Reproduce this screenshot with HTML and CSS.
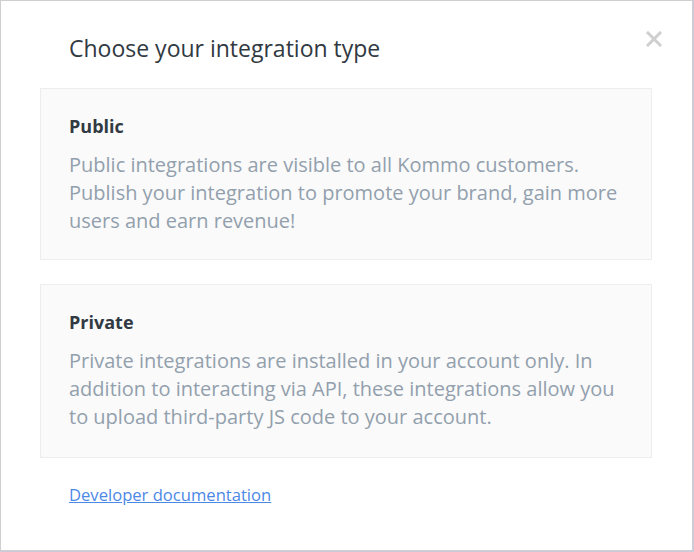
FILE: index.html
```html
<!DOCTYPE html>
<html lang="en">
<head>
    <meta charset="UTF-8">
    <meta name="viewport" content="width=device-width, initial-scale=1.0">
    <title>Choose your integration type</title>
    <link rel="stylesheet" href="styles.css">
</head>
<body>
    <div class="modal">
        <button class="modal-close" aria-label="Close">
            <svg width="16" height="16" viewBox="0 0 16 16">
                <path d="M2 2 L14 14 M14 2 L2 14" stroke="#cfcfcf" stroke-width="3" stroke-linecap="square"/>
            </svg>
        </button>
        <h2 class="modal-title">Choose your integration type</h2>

        <div class="type-card">
            <h3 class="type-name">Public</h3>
            <p class="type-desc">Public integrations are visible to all Kommo customers. Publish your integration to promote your brand, gain more users and earn revenue!</p>
        </div>

        <div class="type-card">
            <h3 class="type-name">Private</h3>
            <p class="type-desc">Private integrations are installed in your account only. In addition to interacting via API, these integrations allow you to upload third-party JS code to your account.</p>
        </div>

        <a class="doc-link" href="#">Developer documentation</a>
    </div>
</body>
</html>
```

FILE: styles.css
```css
* {
    margin: 0;
    padding: 0;
    box-sizing: border-box;
}

body {
    font-family: 'Open Sans', 'Noto Sans', sans-serif;
    background: #cdc9dc;
    width: 694px;
    height: 552px;
}

.modal {
    position: relative;
    width: 693px;
    height: 551px;
    background: #fff;
    border: 1px solid #cfcfcf;
    padding: 29px 40px 0 39px;
}

.modal-close {
    position: absolute;
    top: 30px;
    right: 30px;
    width: 16px;
    height: 16px;
    border: none;
    background: none;
    cursor: pointer;
}

.modal-close svg {
    display: block;
}

.modal-title {
    font-size: 23px;
    font-weight: 400;
    color: #313942;
    padding-left: 29px;
    line-height: 36px;
    margin-bottom: 22px;
}

.type-card {
    background: #fafafa;
    border: 1px solid #ededed;
    padding: 23px 28px 24px;
    margin-bottom: 24px;
}

.type-card:last-of-type {
    padding-bottom: 26px;
}

.type-name {
    font-size: 18px;
    font-weight: 700;
    color: #313942;
    line-height: 28px;
    margin-bottom: 11px;
}

.type-desc {
    font-size: 20px;
    color: #92a0ad;
    line-height: 28px;
}

.doc-link {
    display: inline-block;
    margin-left: 29px;
    margin-top: 1px;
    font-size: 16.6px;
    color: #4c88e6;
    text-decoration: underline;
}
```
